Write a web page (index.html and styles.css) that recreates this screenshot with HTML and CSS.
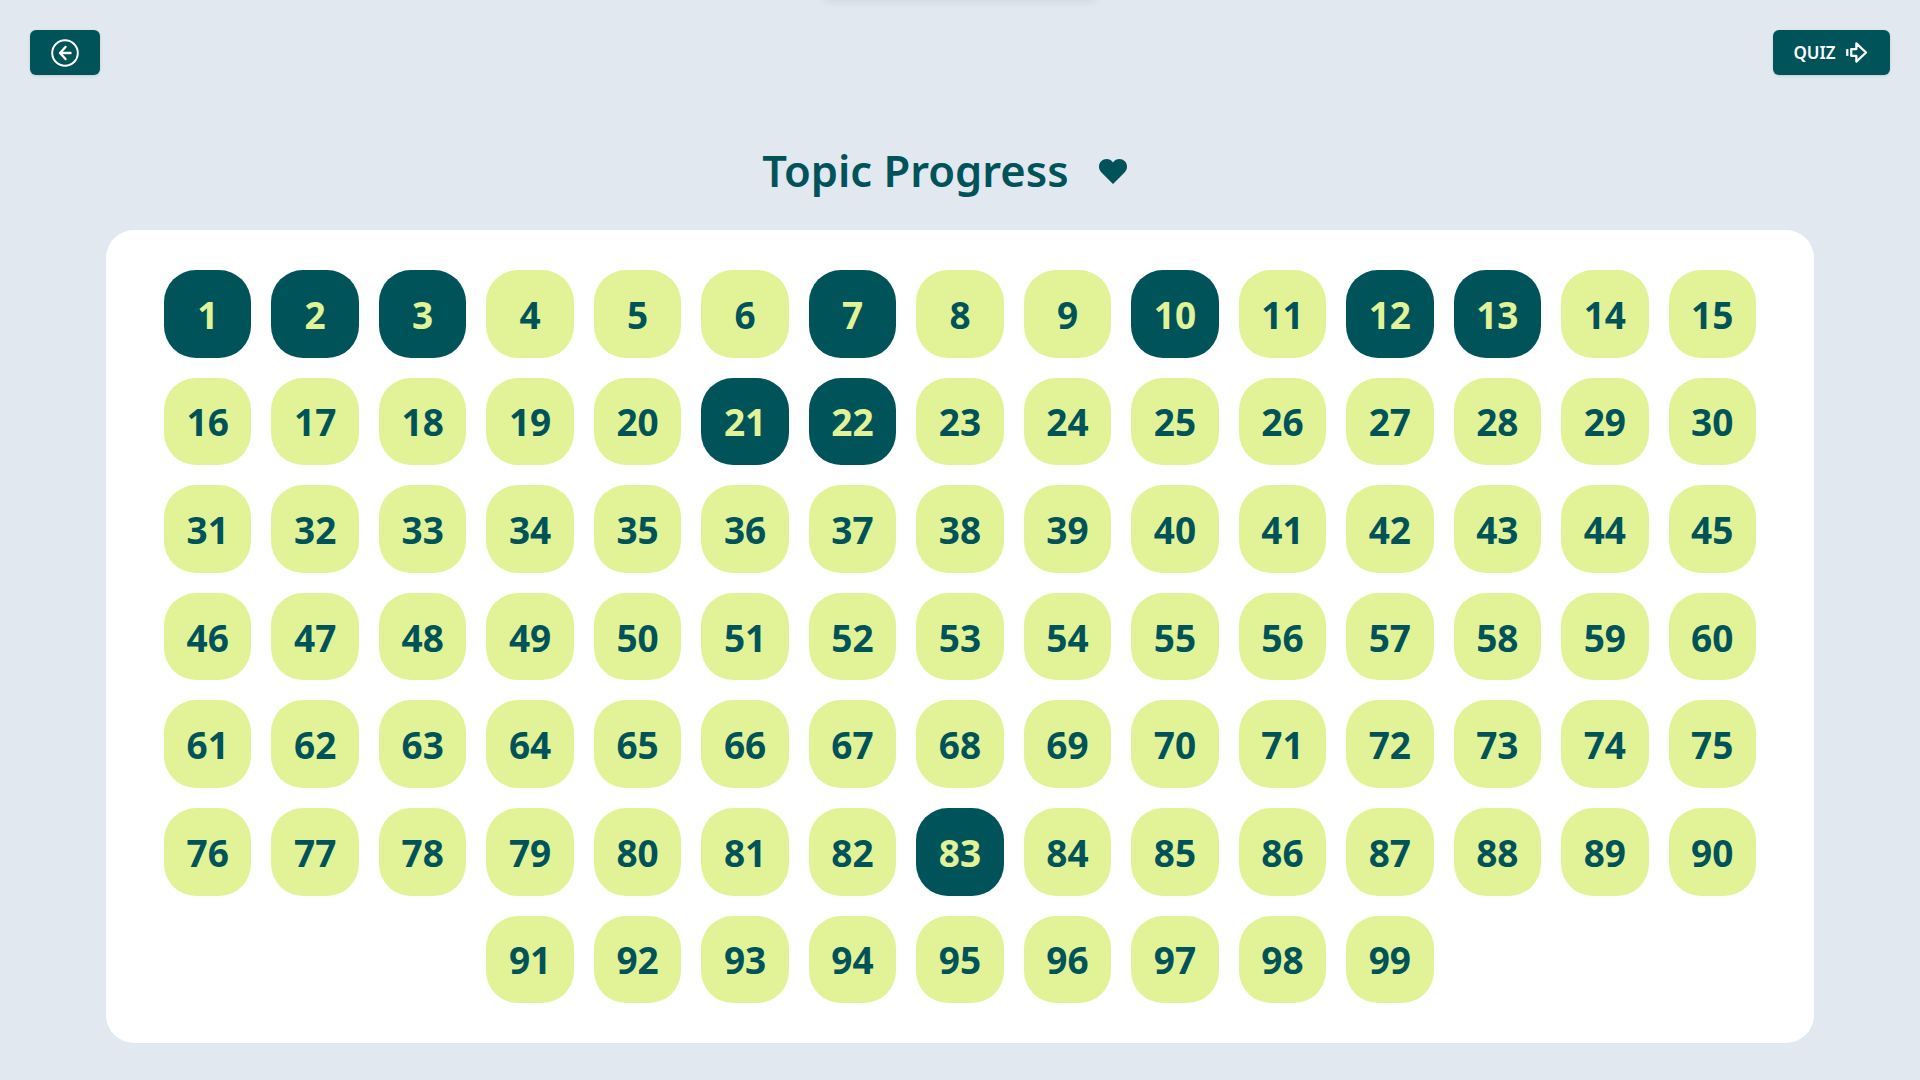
FILE: index.html
```html
<!DOCTYPE html>
<html lang="en">
<head>
    <meta charset="UTF-8">
    <meta name="viewport" content="width=device-width, initial-scale=1.0">
    <title>Topic Progress</title>
    <link rel="stylesheet" href="styles.css">
</head>
<body>
    <div class="top-shadow"></div>

    <div class="toolbar">
        <button class="btn">
            <svg class="icon-back" viewBox="0 0 28 28" fill="none" stroke="#fff" stroke-linecap="round" stroke-linejoin="round">
                <circle cx="14" cy="14" r="12.8" stroke-width="2"/>
                <path d="M14.500 8 9 14l5.500 6M9.500 14h10" stroke-width="2.400"/>
            </svg>
        </button>
        <button class="btn btn-quiz">
            QUIZ
            <svg class="icon-quiz" viewBox="0 0 22 22" fill="none" stroke="#fff" stroke-width="2" stroke-linejoin="round">
                <path d="M2 8v6"/>
                <path d="M5.500 8h4.500V3l8.500 8-8.500 8v-5H5.500z"/>
            </svg>
        </button>
    </div>

    <h1 class="title">
        Topic Progress
        <svg class="icon-heart" viewBox="0 0 28 25" fill="#01535a">
            <path d="M14 25 2.500 13.600C-.8 10.200-.8 5.200 2.200 2.200 5.300-.8 10.200-.7 13 2.300l1 1.100 1-1.100c2.800-3 7.700-3.100 10.800-.1 3 3 3 8-.3 11.400z"/>
        </svg>
    </h1>

    <div class="card">
        <div class="tile done">1</div>
        <div class="tile done">2</div>
        <div class="tile done">3</div>
        <div class="tile">4</div>
        <div class="tile">5</div>
        <div class="tile">6</div>
        <div class="tile done">7</div>
        <div class="tile">8</div>
        <div class="tile">9</div>
        <div class="tile done">10</div>
        <div class="tile">11</div>
        <div class="tile done">12</div>
        <div class="tile done">13</div>
        <div class="tile">14</div>
        <div class="tile">15</div>
        <div class="tile">16</div>
        <div class="tile">17</div>
        <div class="tile">18</div>
        <div class="tile">19</div>
        <div class="tile">20</div>
        <div class="tile done">21</div>
        <div class="tile done">22</div>
        <div class="tile">23</div>
        <div class="tile">24</div>
        <div class="tile">25</div>
        <div class="tile">26</div>
        <div class="tile">27</div>
        <div class="tile">28</div>
        <div class="tile">29</div>
        <div class="tile">30</div>
        <div class="tile">31</div>
        <div class="tile">32</div>
        <div class="tile">33</div>
        <div class="tile">34</div>
        <div class="tile">35</div>
        <div class="tile">36</div>
        <div class="tile">37</div>
        <div class="tile">38</div>
        <div class="tile">39</div>
        <div class="tile">40</div>
        <div class="tile">41</div>
        <div class="tile">42</div>
        <div class="tile">43</div>
        <div class="tile">44</div>
        <div class="tile">45</div>
        <div class="tile">46</div>
        <div class="tile">47</div>
        <div class="tile">48</div>
        <div class="tile">49</div>
        <div class="tile">50</div>
        <div class="tile">51</div>
        <div class="tile">52</div>
        <div class="tile">53</div>
        <div class="tile">54</div>
        <div class="tile">55</div>
        <div class="tile">56</div>
        <div class="tile">57</div>
        <div class="tile">58</div>
        <div class="tile">59</div>
        <div class="tile">60</div>
        <div class="tile">61</div>
        <div class="tile">62</div>
        <div class="tile">63</div>
        <div class="tile">64</div>
        <div class="tile">65</div>
        <div class="tile">66</div>
        <div class="tile">67</div>
        <div class="tile">68</div>
        <div class="tile">69</div>
        <div class="tile">70</div>
        <div class="tile">71</div>
        <div class="tile">72</div>
        <div class="tile">73</div>
        <div class="tile">74</div>
        <div class="tile">75</div>
        <div class="tile">76</div>
        <div class="tile">77</div>
        <div class="tile">78</div>
        <div class="tile">79</div>
        <div class="tile">80</div>
        <div class="tile">81</div>
        <div class="tile">82</div>
        <div class="tile done">83</div>
        <div class="tile">84</div>
        <div class="tile">85</div>
        <div class="tile">86</div>
        <div class="tile">87</div>
        <div class="tile">88</div>
        <div class="tile">89</div>
        <div class="tile">90</div>
        <div class="tile">91</div>
        <div class="tile">92</div>
        <div class="tile">93</div>
        <div class="tile">94</div>
        <div class="tile">95</div>
        <div class="tile">96</div>
        <div class="tile">97</div>
        <div class="tile">98</div>
        <div class="tile">99</div>
    </div>
</body>
</html>
```
FILE: styles.css
```css
* { box-sizing: border-box; }
body {
    margin: 0;
    height: 1080px;
    overflow: hidden;
    background: #e2e8f0;
    font-family: "Noto Sans", "Open Sans", sans-serif;
    color: #01535a;
}

/* edge of a panel sitting just above the viewport */
.top-shadow {
    position: absolute;
    top: -20px;
    left: 824px;
    width: 272px;
    height: 20px;
    border-radius: 6px;
    box-shadow: 0 1px 8px rgba(30, 41, 59, 0.1);
}

.toolbar {
    display: flex;
    justify-content: space-between;
    padding: 30px 30px 0;
}
.btn {
    display: flex;
    align-items: center;
    justify-content: center;
    gap: 9px;
    width: 70px;
    height: 45px;
    border: none;
    border-radius: 6px;
    background: #01535a;
    color: #fff;
    font-family: inherit;
    font-size: 17px;
    font-weight: 600;
    box-shadow: 0 1px 3px rgba(0, 0, 0, 0.12);
}
.btn-quiz { width: 117px; }
.icon-back { width: 28px; height: 28px; }
.icon-quiz { width: 25px; height: 25px; }

.title {
    display: flex;
    align-items: center;
    justify-content: center;
    gap: 30px;
    margin: 63px 0 0;
    padding-right: 31px;
    height: 64px;
    font-size: 43.5px;
    font-weight: 600;
    line-height: 64px;
}
.icon-heart { width: 28px; height: 25px; margin-top: 2px; }

.card {
    display: flex;
    flex-wrap: wrap;
    justify-content: center;
    align-content: flex-start;
    gap: 20px;
    width: 1708px;
    height: 813px;
    margin: 28px auto 0;
    padding: 40px 50px;
    border-radius: 28px;
    background: #fff;
}
.tile {
    display: flex;
    align-items: center;
    justify-content: center;
    width: 87.47px;
    height: 87.6px;
    padding-top: 1px;
    border-radius: 32px;
    background: #e2f397;
    font-size: 37px;
    font-weight: 700;
}
.tile.done {
    background: #01535a;
    color: #e2f397;
}
```
